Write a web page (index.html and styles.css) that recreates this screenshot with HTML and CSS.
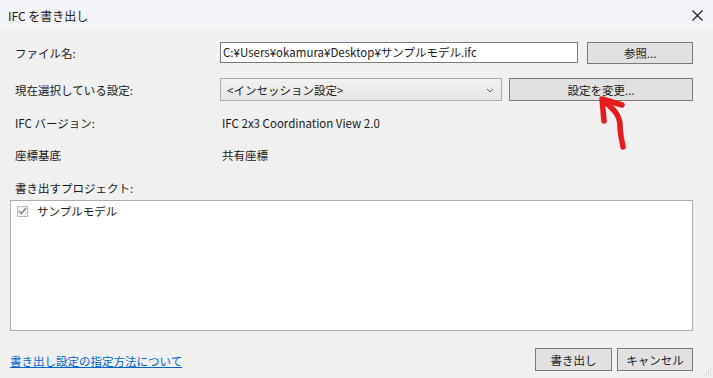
FILE: index.html
```html
<!DOCTYPE html>
<html lang="ja">
<head>
  <meta charset="UTF-8" />
  <title>IFC を書き出し</title>
  <link rel="stylesheet" href="styles.css">
</head>
<body>
  <div class="dialog">
    <div class="titlebar">
      <span class="title">IFC を書き出し</span>
      <svg class="close" width="11" height="11" viewBox="0 0 11 11"><path d="M0.5 0.5 L10.5 10.5 M10.5 0.5 L0.5 10.5" stroke="#1a1a1a" stroke-width="1.1"/></svg>
    </div>

    <div class="content">
      <div class="row row-file">
        <label class="label">ファイル名:</label>
        <div class="textbox">C:¥Users¥okamura¥Desktop¥サンプルモデル.ifc</div>
        <button class="btn btn-browse">参照...</button>
      </div>

      <div class="row row-setup">
        <label class="label">現在選択している設定:</label>
        <div class="combo">
          <span>&lt;インセッション設定&gt;</span>
          <svg class="chev" width="8" height="5" viewBox="0 0 8 5"><path d="M1 1 L4 4 L7 1" fill="none" stroke="#606060" stroke-width="1"/></svg>
        </div>
        <button class="btn btn-change">設定を変更...</button>
      </div>

      <div class="row row-info">
        <span class="label">IFC バージョン:</span>
        <span class="value">IFC 2x3 Coordination View 2.0</span>
      </div>

      <div class="row row-info row-coord">
        <span class="label">座標基底</span>
        <span class="value">共有座標</span>
      </div>

      <div class="section-label">書き出すプロジェクト:</div>
      <div class="listbox">
        <div class="list-item">
          <span class="check">
            <svg width="9" height="8" viewBox="0 0 9 8"><path d="M1 4 L3.5 6.5 L8 1" fill="none" stroke="#8a8a8a" stroke-width="1.6"/></svg>
          </span>
          <span>サンプルモデル</span>
        </div>
      </div>

      <div class="footer">
        <a class="help-link" href="#">書き出し設定の指定方法について</a>
        <div class="actions">
          <button class="btn btn-ok">書き出し</button>
          <button class="btn btn-cancel">キャンセル</button>
        </div>
      </div>
    </div>

    <svg class="arrow" width="713" height="378" viewBox="0 0 713 378">
      <path d="M604 121 L602 99 L622 105 M603 100 C612 108 620 114 620 126 C620 134 622 140 623 147"
            fill="none" stroke="#e61c1c" stroke-width="5.5" stroke-linecap="round" stroke-linejoin="round"/>
    </svg>

    <svg class="grip" width="10" height="10" viewBox="0 0 10 10">
      <g fill="#c8c8c8">
        <rect x="8" y="0" width="1" height="1"/>
        <rect x="6" y="2" width="1" height="1"/><rect x="8" y="2" width="1" height="1"/>
        <rect x="4" y="4" width="1" height="1"/><rect x="6" y="4" width="1" height="1"/><rect x="8" y="4" width="1" height="1"/>
        <rect x="2" y="6" width="1" height="1"/><rect x="4" y="6" width="1" height="1"/><rect x="6" y="6" width="1" height="1"/><rect x="8" y="6" width="1" height="1"/>
      </g>
    </svg>
  </div>
</body>
</html>
```

FILE: styles.css
```css
body {
  margin: 0;
  padding: 0;
  background: #f0f0f0;
  font-family: "Noto Sans CJK JP", "Noto Sans", sans-serif;
  font-size: 11.5px;
  color: #1a1a1a;
}
.dialog {
  position: relative;
  width: 713px;
  height: 378px;
  overflow: hidden;
  background: #f0f0f0;
}
.titlebar {
  height: 30px;
  background: #f3f4f8;
  display: flex;
  align-items: center;
  justify-content: space-between;
  padding: 0 10px 0 8px;
}
.title {
  font-size: 12px;
  color: #1a1a1a;
}
.content {
  padding: 12px 20px 0 10px;
}
.row {
  display: flex;
  align-items: center;
}
.label {
  width: 205px;
  padding-left: 5px;
  flex-shrink: 0;
}
.row-file {
  height: 21px;
}
.textbox {
  width: 356px;
  height: 19px;
  line-height: 19px;
  border: 1px solid #7a7a7a;
  background: #fff;
  padding-left: 2px;
  white-space: nowrap;
  overflow: hidden;
}
.btn {
  font-family: inherit;
  font-size: 11.5px;
  color: #1a1a1a;
  background: #e1e1e1;
  border: 1px solid #7a7a7a;
  padding: 0;
  margin: 0;
}
.btn-browse {
  width: 106px;
  height: 22px;
  margin-left: 9px;
}
.row-setup {
  height: 23px;
  margin-top: 15px;
}
.combo {
  width: 282px;
  height: 23px;
  border: 1px solid #acacac;
  background: linear-gradient(#f2f2f2, #e6e6e6);
  display: flex;
  align-items: center;
  justify-content: space-between;
  padding: 0 7px 0 6px;
  box-sizing: border-box;
}
.chev {
  margin-top: 1px;
}
.btn-change {
  width: 184px;
  height: 23px;
  margin-left: 7px;
}
.row-info {
  height: 20px;
  margin-top: 12px;
}
.row-coord {
  margin-top: 12px;
}
.value {
  padding-left: 2px;
}
.section-label {
  padding-left: 5px;
  margin-top: 13px;
  height: 20px;
  line-height: 20px;
}
.listbox {
  margin-top: 2px;
  height: 129px;
  border: 1px solid #adadad;
  background: #fff;
}
.list-item {
  display: flex;
  align-items: center;
  height: 18px;
  margin-top: 1px;
  padding-left: 6px;
}
.check {
  width: 11px;
  height: 11px;
  border: 1px solid #bcbcbc;
  background: #f4f4f4;
  box-sizing: border-box;
  display: flex;
  align-items: center;
  justify-content: center;
  margin-right: 9px;
}
.footer {
  display: flex;
  justify-content: space-between;
  align-items: center;
  margin-top: 17px;
}
.help-link {
  color: #0066cc;
  text-decoration: underline;
  margin-top: 3px;
}
.actions {
  display: flex;
  gap: 5px;
}
.btn-ok {
  width: 77px;
  height: 23px;
}
.btn-cancel {
  width: 76px;
  height: 23px;
}
.arrow {
  position: absolute;
  left: 0;
  top: 0;
  pointer-events: none;
}
.grip {
  position: absolute;
  right: 1px;
  bottom: 0;
}
```
